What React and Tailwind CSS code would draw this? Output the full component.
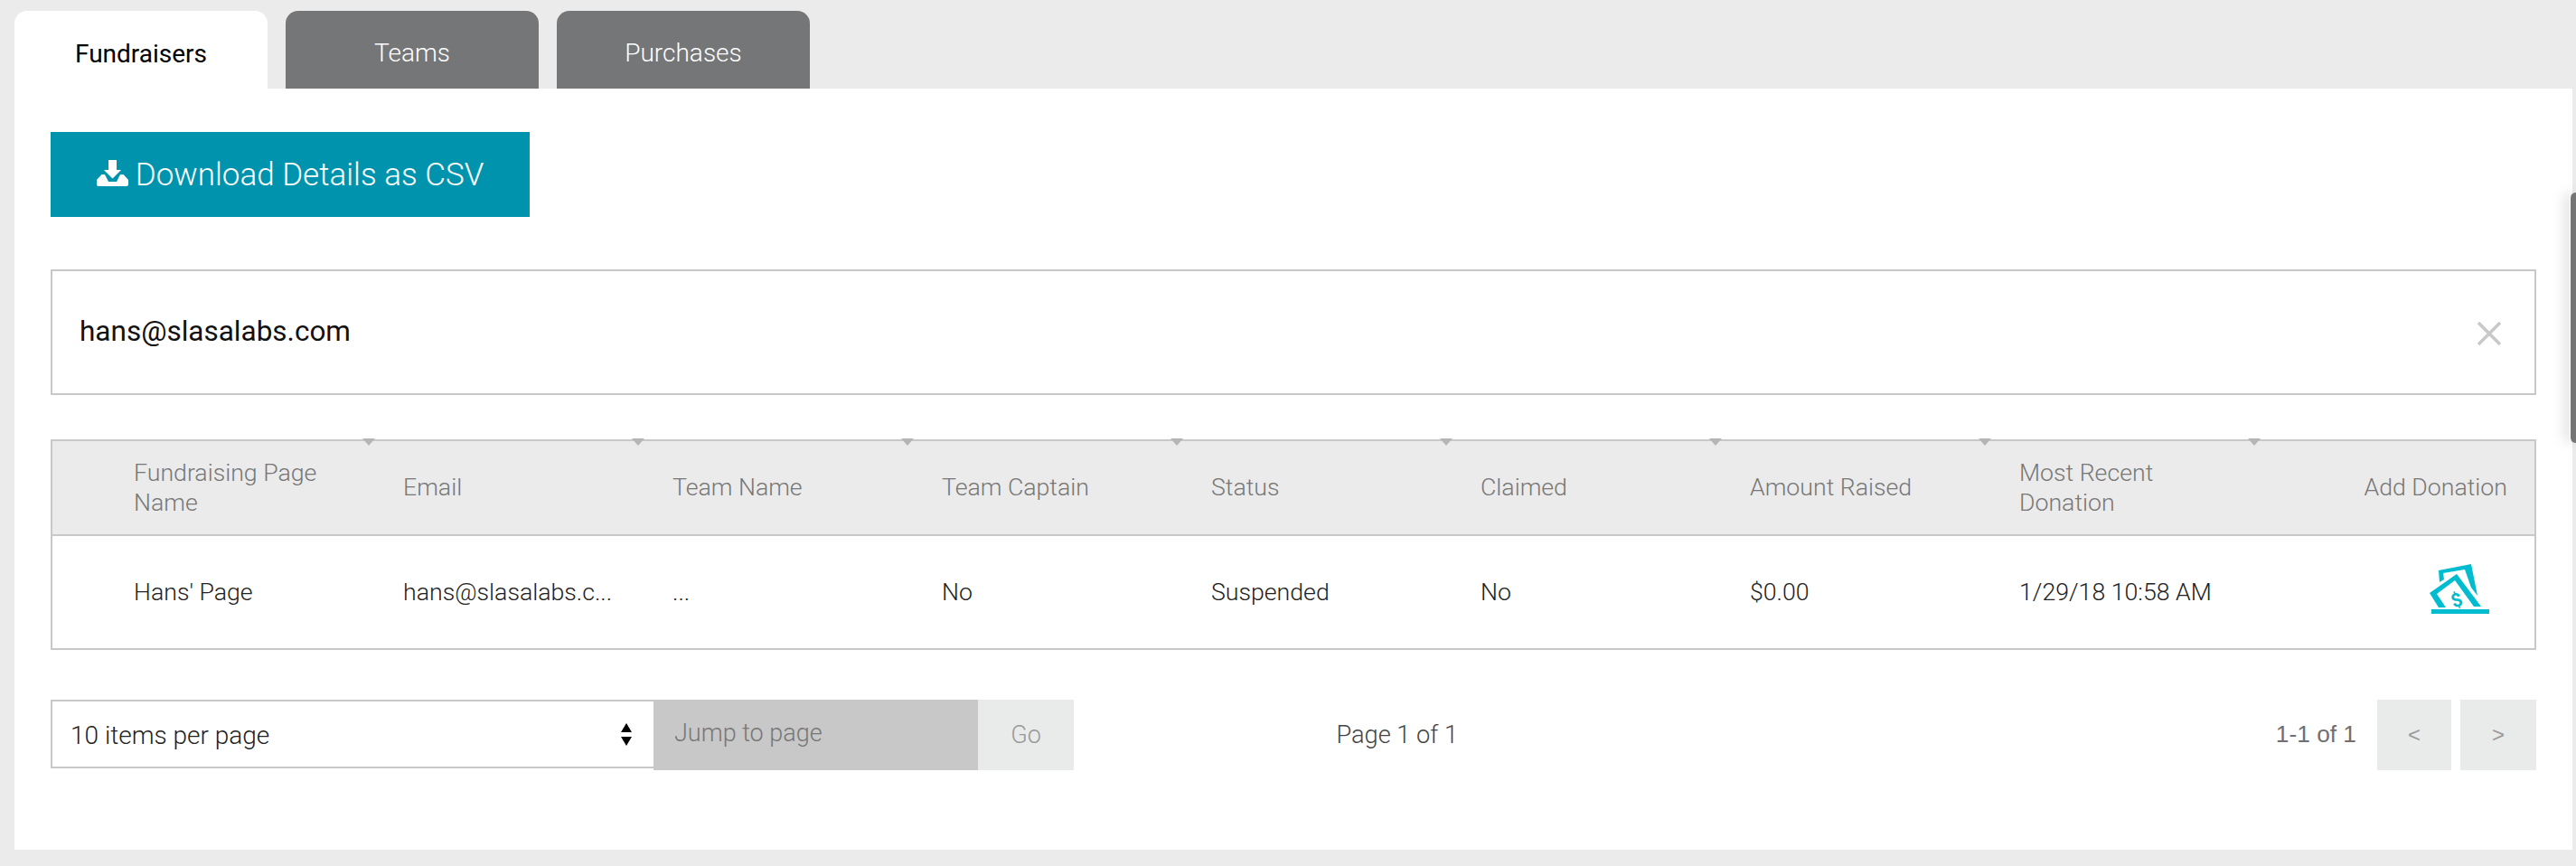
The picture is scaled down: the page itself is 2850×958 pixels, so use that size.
import React from 'react';

const columns = [
  { label: 'Fundraising Page Name', value: "Hans' Page" },
  { label: 'Email', value: 'hans@slasalabs.c...' },
  { label: 'Team Name', value: '...' },
  { label: 'Team Captain', value: 'No' },
  { label: 'Status', value: 'Suspended' },
  { label: 'Claimed', value: 'No' },
  { label: 'Amount Raised', value: '$0.00' },
  { label: 'Most Recent Donation', value: '1/29/18 10:58 AM' },
];

const DownloadIcon = () => (
  <svg width="35" height="29" viewBox="0 0 35 29" className="mr-[8px] mt-[-6px] shrink-0">
    <path d="M13 0h9v11h5l-9.500 9.500L8 11h5z" fill="#fff" />
    <path d="M0 22l5.500-6H9l4 8h9l4-8h3.500L35 22v5a2 2 0 0 1-2 2H2a2 2 0 0 1-2-2z" fill="#fff" />
  </svg>
);

const DonationIcon = () => (
  <svg width="66" height="56" viewBox="0 0 66 56" className="block">
    <path d="M10 8L46 1l7 35-7-9-7-20-24 4 1 7-5 3z" fill="#00bcd0" />
    <path d="M0 33L30 12l27 36h-8L28 19 8 34l10 15h-8z" fill="#00bcd0" />
    <rect x="2" y="51" width="64" height="5" fill="#00bcd0" />
    <text x="30" y="48" textAnchor="middle" fontFamily="Roboto" fontWeight="700" fontSize="21" fill="#00bcd0" transform="rotate(-20 30 41)">$</text>
  </svg>
);

export default function App() {
  return (
    <div className="h-[958px] w-[2850px] bg-[#ebebeb] font-['Roboto',sans-serif] font-light overflow-hidden relative">
      {/* tabs */}
      <div className="flex gap-5 pl-4 pt-3 h-[98px]">
        <div className="w-[280px] h-full bg-white rounded-t-[14px] flex items-center justify-center pt-[10px] text-[28px] font-normal text-black">Fundraisers</div>
        <div className="w-[280px] h-full bg-[#757678] rounded-t-[14px] flex items-center justify-center pt-[8px] text-[28px] text-white">Teams</div>
        <div className="w-[280px] h-full bg-[#757678] rounded-t-[14px] flex items-center justify-center pt-[8px] text-[28px] text-white">Purchases</div>
      </div>

      <div className="ml-4 w-[2830px] h-[842px] bg-white px-10 pt-12">
        <button className="w-[530px] h-[94px] bg-[#0093ad] text-white text-[35px] font-light flex items-center justify-center pt-[3px]">
          <DownloadIcon />
          Download Details as CSV
        </button>

        {/* search */}
        <div className="mt-[58px] h-[139px] border-2 border-[#c8c8c8] flex items-center justify-between pl-[30px] pr-[36px]">
          <span className="text-[31.5px] font-normal text-[#111] mt-[-2px]">hans@slasalabs.com</span>
          <svg width="28" height="28" viewBox="0 0 28 28" className="mt-[2px]">
            <path d="M2 2l24 24M26 2L2 26" stroke="#c8c8c8" strokeWidth="3.500" fill="none" />
          </svg>
        </div>

        {/* table */}
        <div className="mt-[49px] h-[233px] border-2 border-[#c8c8c8] text-[26.7px]">
          <div className="h-[105px] bg-[#ebebeb] border-b-2 border-[#c8c8c8] flex text-[#777] relative">
            {columns.map((col) => (
              <div key={col.label} className="w-[298px] pl-[90px] shrink-0 flex items-center relative leading-[33px]">
                <span className="w-[206px]">{col.label}</span>
                <span className="absolute right-[-59px] top-[-3px] w-0 h-0 border-x-[7px] border-x-transparent border-t-[8px] border-t-[#b5b5b5]" />
              </div>
            ))}
            <div className="flex-1 flex items-center justify-end pr-[30px] whitespace-nowrap font-light">Add Donation</div>
          </div>
          <div className="h-[124px] flex text-[#222]">
            {columns.map((col) => (
              <div key={col.label} className="w-[298px] pl-[90px] shrink-0 flex items-center whitespace-nowrap">{col.value}</div>
            ))}
            <div className="flex-1 flex items-center justify-end pr-[50px] pb-[8px]">
              <DonationIcon />
            </div>
          </div>
        </div>

        {/* pagination */}
        <div className="mt-[55px] flex items-start text-[27px]">
          <div className="w-[667px] h-[76px] border-2 border-r-0 border-[#c8c8c8] flex items-center justify-between pl-[20px] pr-[24px] text-[#222] text-[28px]">
            <span className="pt-[4px]">10 items per page</span>
            <span className="flex flex-col gap-[5px] items-center">
              <span className="w-0 h-0 border-x-[6px] border-x-transparent border-b-[10px] border-b-black" />
              <span className="w-0 h-0 border-x-[6px] border-x-transparent border-t-[10px] border-t-black" />
            </span>
          </div>
          <div className="w-[359px] h-[78px] bg-[#c8c8c8] flex items-center pl-[23px] pb-[4px] text-[#777]">Jump to page</div>
          <div className="w-[106px] h-[78px] bg-[#e9eaea] flex items-center justify-center text-[#999]">Go</div>
          <div className="w-[425px] h-[78px] flex items-center justify-end text-[#444] text-[27.2px] whitespace-nowrap">Page 1 of 1</div>
          <div className="flex-1 h-[78px] flex items-center justify-end font-['Liberation_Sans',sans-serif] font-normal">
            <span className="mr-[23px] text-[#707070] text-[26.300px]">1-1 of 1</span>
            <span className="w-[82px] h-[78px] bg-[#e9eaea] flex items-center justify-center text-[#999] text-[24px]">&lt;</span>
            <span className="ml-[10px] w-[84px] h-[78px] bg-[#e9eaea] flex items-center justify-center text-[#999] text-[24px]">&gt;</span>
          </div>
        </div>
      </div>

      {/* overlay scrollbar */}
      <div className="absolute left-[2843px] top-[213px] w-[12px] h-[277px] bg-[#757575] rounded-l-[6px] shadow-[-6px_0_14px_rgba(0,0,0,0.12)] border-l border-white" />
    </div>
  );
}
